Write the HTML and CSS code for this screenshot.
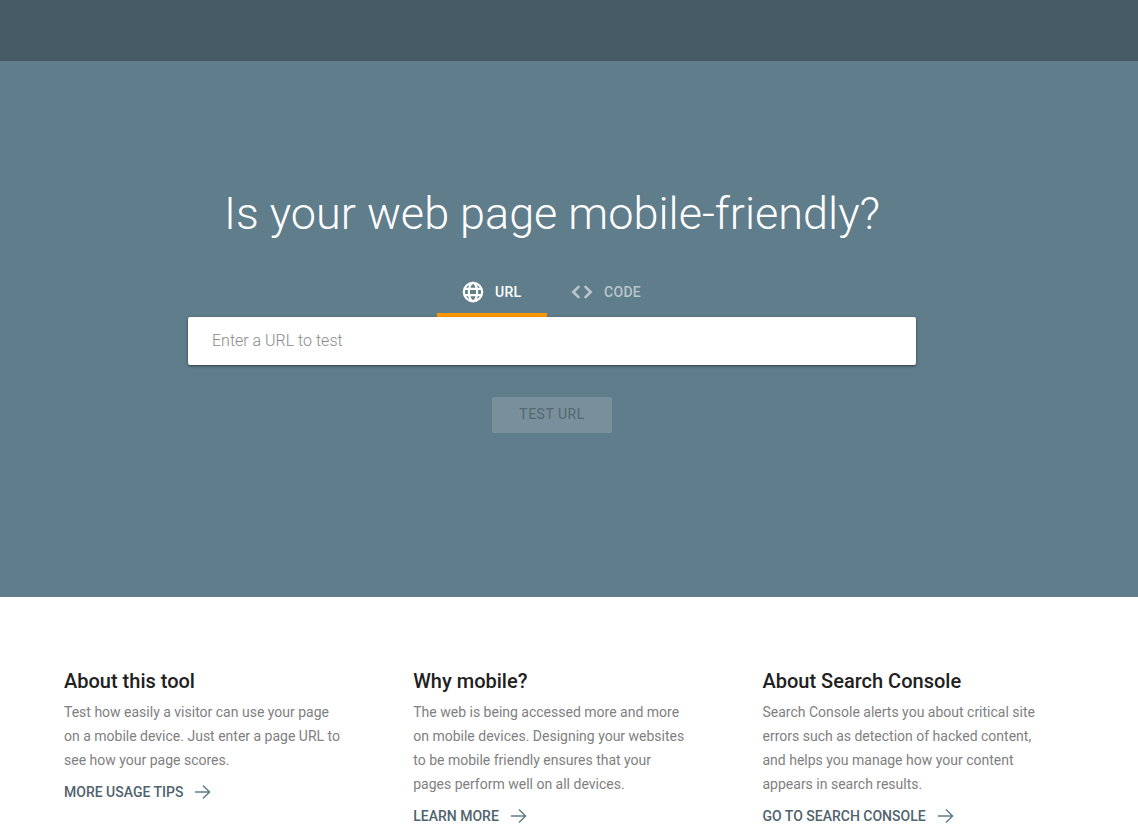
FILE: index.html
```html
<!DOCTYPE html>
<html lang="en">

<head>
    <meta charset="UTF-8">
    <title>Mobile-Friendly Test</title>
    <link rel="stylesheet" href="styles.css">
</head>

<body>
    <header class="top-bar"></header>

    <!-- Hero with the test form -->
    <section class="hero">
        <h1 class="hero-title">Is your web page mobile-friendly?</h1>

        <div class="tabs">
            <div class="tab tab-active">
                <svg class="tab-icon" viewBox="0 0 24 24" fill="none" stroke="#fff" stroke-width="2.4">
                    <circle cx="12" cy="12" r="10" />
                    <ellipse cx="12" cy="12" rx="4.5" ry="10" />
                    <path d="M2.8 8.5h18.4M2.8 15.500h18.4" />
                </svg>
                <span>URL</span>
            </div>
            <div class="tab">
                <svg class="tab-icon" viewBox="0 0 24 24" fill="none" stroke="#b9c6cd" stroke-width="2.8">
                    <path d="M9 5.5 2.5 12 9 18.5M15 5.5l6.5 6.5-6.5 6.5" />
                </svg>
                <span>CODE</span>
            </div>
        </div>

        <div class="url-box">Enter a URL to test</div>
        <div class="test-button">TEST URL</div>
    </section>

    <!-- Info columns -->
    <section class="info">
        <div class="info-col">
            <h2>About this tool</h2>
            <p>Test how easily a visitor can use your page<br>on a mobile device. Just enter a page URL to<br>see how your page scores.</p>
            <a class="info-link">MORE USAGE TIPS
                <svg class="arrow" viewBox="0 0 18 16" fill="none" stroke="#5f7c8a" stroke-width="1.5">
                    <path d="M1 8h15.5M9.5 1l7 7-7 7" />
                </svg>
            </a>
        </div>
        <div class="info-col">
            <h2>Why mobile?</h2>
            <p>The web is being accessed more and more<br>on mobile devices. Designing your websites<br>to be mobile friendly ensures that your<br>pages perform well on all devices.</p>
            <a class="info-link">LEARN MORE
                <svg class="arrow" viewBox="0 0 18 16" fill="none" stroke="#5f7c8a" stroke-width="1.5">
                    <path d="M1 8h15.5M9.5 1l7 7-7 7" />
                </svg>
            </a>
        </div>
        <div class="info-col">
            <h2>About Search Console</h2>
            <p>Search Console alerts you about critical site<br>errors such as detection of hacked content,<br>and helps you manage how your content<br>appears in search results.</p>
            <a class="info-link">GO TO SEARCH CONSOLE
                <svg class="arrow" viewBox="0 0 18 16" fill="none" stroke="#5f7c8a" stroke-width="1.5">
                    <path d="M1 8h15.5M9.5 1l7 7-7 7" />
                </svg>
            </a>
        </div>
    </section>
</body>

</html>
```

FILE: styles.css
```css
html,
body {
    margin: 0;
    height: 838px;
    overflow: hidden;
}

body {
    font-family: Roboto, "Liberation Sans", sans-serif;
    background-color: #fff;
}

.top-bar {
    height: 61px;
    background-color: #455a64;
}

/* Hero */
.hero {
    height: 536px;
    background-color: #607d8b;
    display: flex;
    flex-direction: column;
    align-items: center;
    box-sizing: border-box;
    padding: 120px 34px 0 0;
}

.hero-title {
    margin: 0;
    font-size: 45px;
    font-weight: 300;
    line-height: 66px;
    color: #fff;
    white-space: nowrap;
}

.tabs {
    display: flex;
    margin-top: 29px;
    margin-right: 10px;
}

.tab {
    width: 110px;
    height: 41px;
    box-sizing: border-box;
    display: flex;
    align-items: center;
    gap: 11px;
    padding: 0 0 9px 24px;
    font-size: 14px;
    font-weight: 500;
    letter-spacing: 0.3px;
    color: #b9c6cd;
}

.tab-active {
    color: #fff;
    border-bottom: 4px solid #ff9800;
    padding: 0 0 5px 25px;
}

.tab-icon {
    width: 22px;
    height: 22px;
}

.url-box {
    width: 728px;
    height: 48px;
    box-sizing: border-box;
    padding-left: 24px;
    background-color: #fff;
    border-radius: 2px;
    box-shadow: 0 1px 3px rgba(0, 0, 0, 0.5);
    font-size: 16px;
    font-weight: 300;
    line-height: 47px;
    color: #8a8a8a;
}

.test-button {
    width: 120px;
    height: 36px;
    margin-top: 32px;
    background-color: #78909c;
    border-radius: 2px;
    text-align: center;
    font-size: 14px;
    font-weight: 400;
    line-height: 35px;
    letter-spacing: 0.5px;
    color: #56686f;
}

/* Info columns */
.info {
    display: grid;
    grid-template-columns: repeat(3, 349.25px);
    padding: 70px 0 0 64px;
}

.info-col h2 {
    margin: 0;
    font-size: 20px;
    font-weight: 500;
    line-height: 28px;
    color: #212121;
}

.info-col p {
    margin: 5px 0 0;
    font-size: 14px;
    line-height: 24px;
    color: #808080;
}

.info-link {
    display: flex;
    align-items: center;
    gap: 11px;
    margin-top: 8px;
    height: 24px;
    font-size: 14px;
    font-weight: 500;
    color: #4f636d;
}

.arrow {
    width: 17px;
    height: 16px;
}
```
